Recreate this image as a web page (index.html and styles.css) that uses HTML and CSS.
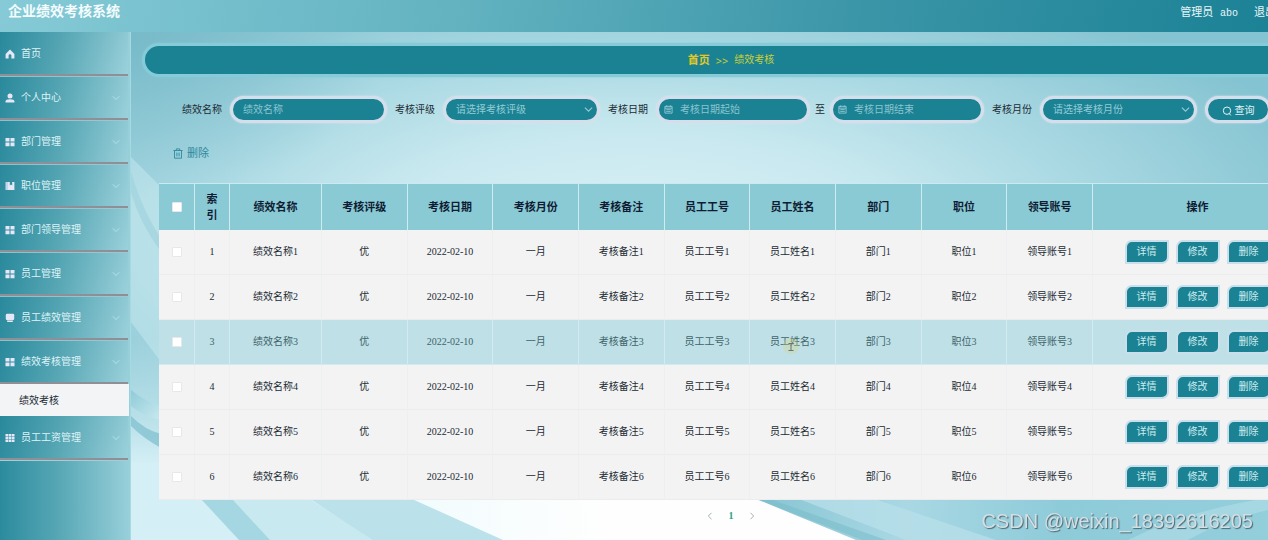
FILE: index.html
```html
<!DOCTYPE html>
<html lang="zh-CN">
<head>
<meta charset="utf-8">
<title>企业绩效考核系统</title>
<link rel="stylesheet" href="styles.css">
</head>
<body>
<svg class="sprite" aria-hidden="true">
  <symbol id="i-home" viewBox="0 0 10 10"><path d="M5 .6 .6 5v4.4h3V6.6a1.4 1.4 0 0 1 2.8 0v2.8h3V5z"/></symbol>
  <symbol id="i-user" viewBox="0 0 10 10"><circle cx="5" cy="2.9" r="2.5"/><path d="M.6 9.6V8.2C.6 6.900 2 6.200 5 6.200s4.400.7 4.400 2v1.400z"/></symbol>
  <symbol id="i-grid" viewBox="0 0 10 10"><path d="M.5 1h4v3.600h-4zM5.500 1h4v3.600h-4zM.5 5.600h4v3.600h-4zM5.500 5.600h4v3.600h-4z"/></symbol>
  <symbol id="i-book" viewBox="0 0 10 10"><path d="M.6 1h1.200v8H.6zM2.200 1h2.600v3.400l1.200-.9 1.200.9V1h2.200v8H2.200z"/></symbol>
  <symbol id="i-screen" viewBox="0 0 10 10"><rect x=".8" y=".8" width="8.400" height="6.400" rx="1.400"/><path d="M2.200 7.600h5.600v1.400H2.200z"/></symbol>
  <symbol id="i-table" viewBox="0 0 10 10"><path d="M.5 1h2.700v2.300H.5zM3.700 1h2.600v2.300H3.700zM6.800 1h2.700v2.300H6.800zM.5 3.800h2.700v2.300H.5zM3.700 3.800h2.600v2.300H3.700zM6.800 3.800h2.700v2.300H6.800zM.5 6.600h2.700v2.300H.5zM3.700 6.600h2.600v2.300H3.700zM6.800 6.600h2.700v2.300H6.800z"/></symbol>
  <symbol id="i-down" viewBox="0 0 8 8"><path d="M.8 2.300 4 5.500l3.200-3.200" fill="none" stroke="currentColor"/></symbol>
  <symbol id="i-left" viewBox="0 0 8 8"><path d="M5.500.8 2.300 4l3.200 3.200" fill="none" stroke="currentColor"/></symbol>
  <symbol id="i-right" viewBox="0 0 8 8"><path d="M2.500.8 5.700 4 2.500 7.200" fill="none" stroke="currentColor"/></symbol>
  <symbol id="i-date" viewBox="0 0 10 10"><path d="M1 1.500h8V9H1zM1 3.500h8M3 .4v1.800M7 .4v1.800M2.500 5.200h5M2.500 7.100h5" fill="none" stroke="currentColor"/></symbol>
  <symbol id="i-trash" viewBox="0 0 10 11"><path d="M.4 2.500h9.200M3.300 2.500V.9h3.400v1.600M1.500 2.500v7.700h7V2.500M3.900 4.600v3.700M6.100 4.600v3.700" fill="none" stroke="currentColor" stroke-width=".9"/></symbol>
  <symbol id="i-search" viewBox="0 0 10 10"><circle cx="5" cy="4.700" r="3.700" fill="none" stroke="currentColor"/><path d="m7.200 7.500 1.600 1.900" stroke="currentColor"/></symbol>
</svg>

<div class="page">
  <header class="topbar">
    <h1 class="brand">企业绩效考核系统</h1>
    <div class="account"><span>管理员 <span class="login">abo</span></span><a href="#">退出登录</a></div>
  </header>

  <div class="body">
    <nav class="sidebar">
      <a class="item" href="#"><svg class="icon"><use href="#i-home"/></svg>首页</a>
      <a class="item" href="#"><svg class="icon"><use href="#i-user"/></svg>个人中心<svg class="caret"><use href="#i-down"/></svg></a>
      <a class="item" href="#"><svg class="icon"><use href="#i-grid"/></svg>部门管理<svg class="caret"><use href="#i-down"/></svg></a>
      <a class="item" href="#"><svg class="icon"><use href="#i-book"/></svg>职位管理<svg class="caret"><use href="#i-down"/></svg></a>
      <a class="item" href="#"><svg class="icon"><use href="#i-grid"/></svg>部门领导管理<svg class="caret"><use href="#i-down"/></svg></a>
      <a class="item" href="#"><svg class="icon"><use href="#i-grid"/></svg>员工管理<svg class="caret"><use href="#i-down"/></svg></a>
      <a class="item" href="#"><svg class="icon"><use href="#i-screen"/></svg>员工绩效管理<svg class="caret"><use href="#i-down"/></svg></a>
      <a class="item" href="#"><svg class="icon"><use href="#i-grid"/></svg>绩效考核管理<svg class="caret"><use href="#i-down"/></svg></a>
      <a class="subitem" href="#">绩效考核</a>
      <a class="item" href="#"><svg class="icon"><use href="#i-table"/></svg>员工工资管理<svg class="caret"><use href="#i-down"/></svg></a>
    </nav>

    <main class="main">
      <svg class="waves" viewBox="0 0 1137 508" preserveAspectRatio="none" aria-hidden="true">
        <defs>
          <linearGradient id="w1" x1="0" x2="1" y1="0" y2="1"><stop offset="0" stop-color="#8fcbd8"/><stop offset="1" stop-color="#c9e9f0"/></linearGradient>
          <linearGradient id="w2" x1="0" x2="1"><stop offset="0" stop-color="#86c3d1"/><stop offset=".3" stop-color="#a9d8e4"/><stop offset=".6" stop-color="#8ecbd9"/><stop offset="1" stop-color="#93cedb"/></linearGradient>
          <linearGradient id="w3" x1="0" x2="1"><stop offset="0" stop-color="#eefbfd"/><stop offset=".4" stop-color="#fefefe"/></linearGradient>
        </defs>
        <path fill="url(#w3)" d="M220 440H660L860 508H350z"/>
        <path fill="#bbe1eb" d="M140 440h80L281 467 372 508H240z"/>
        <path fill="#c8e9f0" d="M60 440h80L178 467 242 508H130z"/>
        <path fill="#a5d7e2" d="M40 440h32l29 27 38 41h-31L70 467z"/>
        <path fill="#d5eff4" d="M0 125 30 155V330L0 290z" opacity=".4"/>
        <path fill="#9bcfdb" d="M0 140q12 40 30 66v14Q8 190 0 160z" opacity=".55"/>
        <path fill="url(#w1)" d="M0 358q15 12 30 16v14Q12 384 0 374z"/>
        <path fill="#85c3d1" d="M0 384q14 14 30 18v14Q12 406 0 394z" opacity=".8"/>
        <path fill="url(#w2)" d="M618 464H1137V508H725z"/>
        <path fill="#b6dee8" d="M660 464h75l130 44h-90z" opacity=".8"/>
        <path fill="#79bccb" d="m618 464 12 0 125 44h-24z" opacity=".55"/>
        <path fill="#b8e1ea" d="M1137 466q-80 12-140 42h60q35-20 80-30z" opacity=".5"/>
      </svg>

      <div class="crumbs"><a class="root" href="#">首页</a><span class="sep">&gt;&gt;</span><span class="here">绩效考核</span></div>

      <form class="filters">
        <label for="f-name">绩效名称</label>
        <span class="field"><input id="f-name" type="text" placeholder="绩效名称"></span>
        <label for="f-grade">考核评级</label>
        <span class="field"><select id="f-grade"><option>请选择考核评级</option></select><svg class="arrow"><use href="#i-down"/></svg></span>
        <label for="f-from">考核日期</label>
        <span class="range">
          <span class="field date"><svg class="cal"><use href="#i-date"/></svg><input id="f-from" type="text" placeholder="考核日期起始"></span>
          <label for="f-to">至</label>
          <span class="field date"><svg class="cal"><use href="#i-date"/></svg><input id="f-to" type="text" placeholder="考核日期结束"></span>
        </span>
        <label for="f-month">考核月份</label>
        <span class="field"><select id="f-month"><option>请选择考核月份</option></select><svg class="arrow"><use href="#i-down"/></svg></span>
        <button class="search" type="button"><svg class="icon"><use href="#i-search"/></svg>查询</button>
      </form>

      <div class="tools"><button class="remove" type="button"><svg class="trash"><use href="#i-trash"/></svg>删除</button></div>

      <table class="grid">
        <colgroup><col class="c-tick"><col class="c-index"><col class="c-name"><col span="9"><col class="c-ops"></colgroup>
        <thead>
          <tr><th><input type="checkbox" aria-label="全选"></th><th><span class="stack">索引</span></th><th>绩效名称</th><th>考核评级</th><th>考核日期</th><th>考核月份</th><th>考核备注</th><th>员工工号</th><th>员工姓名</th><th>部门</th><th>职位</th><th>领导账号</th><th>操作</th></tr>
        </thead>
        <tbody>
          <tr><td><input type="checkbox" aria-label="选择1"></td><td>1</td><td>绩效名称1</td><td>优</td><td>2022-02-10</td><td>一月</td><td>考核备注1</td><td>员工工号1</td><td>员工姓名1</td><td>部门1</td><td>职位1</td><td>领导账号1</td><td><div class="ops"><button type="button">详情</button><button type="button">修改</button><button type="button">删除</button></div></td></tr>
          <tr><td><input type="checkbox" aria-label="选择2"></td><td>2</td><td>绩效名称2</td><td>优</td><td>2022-02-10</td><td>一月</td><td>考核备注2</td><td>员工工号2</td><td>员工姓名2</td><td>部门2</td><td>职位2</td><td>领导账号2</td><td><div class="ops"><button type="button">详情</button><button type="button">修改</button><button type="button">删除</button></div></td></tr>
          <tr class="active"><td><input type="checkbox" aria-label="选择3"></td><td>3</td><td>绩效名称3</td><td>优</td><td>2022-02-10</td><td>一月</td><td>考核备注3</td><td>员工工号3</td><td><span class="pointed">员工姓名3<svg class="cursor" viewBox="0 0 16 16" aria-hidden="true"><circle cx="8" cy="8" r="8" fill="#d9d58c" opacity=".35"/><path d="M5.500 5.500H10.500M8 5.500v7M5.500 12.500h5" fill="none" stroke="#66756f"/></svg></span></td><td>部门3</td><td>职位3</td><td>领导账号3</td><td><div class="ops"><button type="button">详情</button><button type="button">修改</button><button type="button">删除</button></div></td></tr>
          <tr><td><input type="checkbox" aria-label="选择4"></td><td>4</td><td>绩效名称4</td><td>优</td><td>2022-02-10</td><td>一月</td><td>考核备注4</td><td>员工工号4</td><td>员工姓名4</td><td>部门4</td><td>职位4</td><td>领导账号4</td><td><div class="ops"><button type="button">详情</button><button type="button">修改</button><button type="button">删除</button></div></td></tr>
          <tr><td><input type="checkbox" aria-label="选择5"></td><td>5</td><td>绩效名称5</td><td>优</td><td>2022-02-10</td><td>一月</td><td>考核备注5</td><td>员工工号5</td><td>员工姓名5</td><td>部门5</td><td>职位5</td><td>领导账号5</td><td><div class="ops"><button type="button">详情</button><button type="button">修改</button><button type="button">删除</button></div></td></tr>
          <tr><td><input type="checkbox" aria-label="选择6"></td><td>6</td><td>绩效名称6</td><td>优</td><td>2022-02-10</td><td>一月</td><td>考核备注6</td><td>员工工号6</td><td>员工姓名6</td><td>部门6</td><td>职位6</td><td>领导账号6</td><td><div class="ops"><button type="button">详情</button><button type="button">修改</button><button type="button">删除</button></div></td></tr>
        </tbody>
      </table>

      <div class="pager">
        <button type="button" aria-label="上一页"><svg><use href="#i-left"/></svg></button>
        <button class="current" type="button">1</button>
        <button type="button" aria-label="下一页"><svg><use href="#i-right"/></svg></button>
      </div>
    </main>
  </div>
</div>
<div class="watermark">CSDN @weixin_18392616205</div>
</body>
</html>
```
FILE: styles.css
```css
* { box-sizing: border-box; }

body {
  margin: 0;
  overflow: hidden;
  font: 10px/16px "Liberation Serif", "Noto Sans CJK SC", sans-serif;
  color: #222b33;
}

a { color: inherit; text-decoration: none; }
button, input, select { font: inherit; color: inherit; margin: 0; }
button { cursor: pointer; }
svg { fill: currentColor; flex: none; }
.sprite { display: none; }

.page {
  display: flex;
  flex-direction: column;
  min-width: 1331px;
  min-height: 100vh;
}

.topbar {
  display: flex;
  align-items: center;
  justify-content: space-between;
  height: 32px;
  padding: 0 33px 8px 8px;
  background: linear-gradient(100deg, #86cad7 0%, #62b2c0 35%, #3a95a7 65%, #1c8296 95%);
  color: #e9f6f8;
}
.brand { margin: 0; font-size: 14px; line-height: 24px; color: #f4fcfd; }
.account { display: flex; gap: 16px; font-size: 11px; }
.login { margin-left: 4px; font: 10px "Liberation Mono", monospace; }

.body { display: flex; flex: 1; }

.sidebar {
  flex: none;
  width: 131px;
  border-right: 1px solid #a6dae2;
  background: linear-gradient(90deg, #2b8b9d, #57a7b5 45%, #98d0da);
  color: #dff3f6;
}
.item {
  display: flex;
  align-items: center;
  gap: 6px;
  height: 44px;
  margin-right: 2px;
  padding: 2px 8px 0 5px;
  border-bottom: 2px solid #8f8f98;
  box-shadow: 0 1px #a5cdd5;
  background: linear-gradient(160deg, #1f82952e, #ffffff0c);
}
.icon { width: 10px; height: 10px; }
.sidebar .icon { color: #e6e8f8; }
.caret { width: 8px; height: 8px; margin-left: auto; color: #b4e2ea; }
.subitem {
  display: flex;
  align-items: center;
  height: 32px;
  margin-right: 1px;
  padding: 2px 0 0 19px;
  background: #f2f4f5;
  color: #222b33;
}

.main {
  position: relative;
  flex: 1;
  padding: 11px 11px 0;
  background:
    linear-gradient(180deg, #d4eff500 60%, #d4eff5 85%),
    radial-gradient(ellipse 260px 170px at 0 0, #74b7c6c0, #74b7c600),
    radial-gradient(ellipse 760px 300px at 42% 40%, #dbf2f7 0%, #c8e8ef 35%, #aad9e3 60%, #84c3d1 95%);
}
.waves { position: absolute; inset: 0 63px 0 0; width: calc(100% - 63px); height: 100%; }
.crumbs, .filters, .tools, .grid, .pager { position: relative; }

.crumbs {
  display: flex;
  align-items: center;
  justify-content: center;
  gap: 6px;
  height: 34px;
  border: 3px solid #86cbd8;
  border-radius: 17px;
  background: #1b8293;
  box-shadow: 0 0 2px #86cbd8;
  color: #c9cf38;
}
.root { font-size: 11px; font-weight: bold; color: #e0c828; }
.sep { font: 11px "Noto Sans", sans-serif; }

.filters {
  display: flex;
  align-items: center;
  gap: 8px;
  margin-top: 19px;
  padding-left: 40px;
}
.range { display: flex; align-items: center; gap: 5px; }
.field, .search {
  display: flex;
  align-items: center;
  height: 27px;
  border: 3px solid #d5dfeb;
  border-radius: 14px;
  background: #1b8293;
  box-shadow: 0 0 2px #dfe3ef;
  color: #93cbd6;
}
.field { position: relative; width: 157px; }
.field.date { width: 154px; padding-left: 5px; }
.field input, .field select {
  width: 100%;
  height: 21px;
  padding: 0 10px;
  border: 0;
  outline: 0;
  background: none;
  appearance: none;
}
.field.date input { padding-left: 7px; }
.field input::placeholder { color: #8bc4d0; opacity: 1; }
.arrow { position: absolute; right: 4px; top: 6px; width: 9px; height: 9px; pointer-events: none; }
.cal { width: 9px; height: 9px; }
.search { width: 66px; justify-content: center; gap: 3px; padding: 2px 0 0; color: #e3f4f6; }

.tools { display: flex; margin-top: 20px; padding-left: 31px; }
.remove {
  display: flex;
  align-items: center;
  gap: 4px;
  height: 20px;
  padding: 0;
  border: 0;
  background: none;
  font-size: 11px;
  color: #2f8a9d;
}
.trash { width: 10px; height: 11px; }

.grid {
  width: calc(100% - 34px);
  margin: 20px 17px 0;
  border-collapse: separate;
  border-spacing: 0;
  table-layout: fixed;
  text-align: center;
}
.c-tick { width: 36px; }
.c-index { width: 35px; }
.c-name { width: 92px; }
.c-ops { width: 210px; }
.grid th, .grid td { padding: 0; vertical-align: middle; }
.grid th {
  height: 47px;
  border-top: 1px solid #c8eaf0;
  border-right: 1px solid #cfecf1;
  background: #89cad5;
  font-size: 11px;
  color: #101c33;
}
.stack { display: block; width: 11px; margin: 0 auto; }
.grid td {
  height: 45px;
  border-right: 1px solid #eeeff0;
  border-bottom: 1px solid #ececee;
  background: #f3f3f4;
}
.grid .active td { border-color: #d2ebf0; background: #bee0e6; color: #41646b; }
.grid input {
  display: block;
  width: 10px;
  height: 10px;
  margin: 0 auto;
  border: 1px solid #e6e8eb;
  border-radius: 1px;
  background: #fff;
  appearance: none;
}
.pointed { position: relative; }
.cursor { position: absolute; left: 13px; top: 2px; width: 16px; height: 16px; }

.ops { display: flex; justify-content: center; gap: 7px; }
.ops button {
  width: 44px;
  height: 24px;
  padding: 0;
  border: 2px solid #c9dfeb;
  border-radius: 7px 0;
  background: #1b8293;
  color: #cdebef;
}

.pager { display: flex; align-items: center; justify-content: center; gap: 1px; height: 32px; }
.pager button {
  display: flex;
  align-items: center;
  justify-content: center;
  width: 20px;
  height: 20px;
  padding: 0;
  border: 0;
  background: none;
  color: #9fb0b8;
}
.pager svg { width: 8px; height: 8px; }
.pager .current { font-weight: bold; color: #28a08c; }

.watermark {
  position: fixed;
  right: 15px;
  bottom: 7px;
  font: 20px/24px "Liberation Sans", sans-serif;
  color: #d5dfe3;
  text-shadow: 1px 1px 1px #4c6670;
}
```
